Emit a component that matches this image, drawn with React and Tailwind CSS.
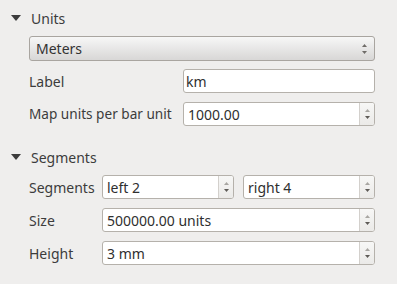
import React from 'react';

const Arrow = ({ down, className }) => (
  <svg width="5" height="3" viewBox="0 0 5 3" className={className}>
    {down ? <path d="M0 0h5L2.5 3z" fill="currentColor" /> : <path d="M0 3h5L2.5 0z" fill="currentColor" />}
  </svg>
);

function SectionHeader({ title }) {
  return (
    <div className="flex items-center h-[18px] pl-[11px]">
      <svg width="10" height="6" viewBox="0 0 10 6" className="text-[#3c3c3c]">
        <path d="M0 0h10L5 6z" fill="currentColor" />
      </svg>
      <span className="ml-[10px] text-[14px]">{title}</span>
    </div>
  );
}

function SpinBox({ value, className }) {
  return (
    <div className={`flex h-[24px] rounded-[3px] border border-[#b5b1ab] bg-white overflow-hidden ${className}`}>
      <div className="flex-1 flex items-center pl-[4px] text-[#2f2f2f] text-[14px]">{value}</div>
      <div className="w-[15px] flex flex-col items-center justify-between pt-[6px] pb-[6px] border-l border-[#d3d0cc] bg-gradient-to-b from-[#f7f7f6] to-[#ebeae8]">
        <Arrow className="text-[#a8a6a2]" />
        <Arrow down className="text-[#5e5b57]" />
      </div>
    </div>
  );
}

function TextBox({ value, className }) {
  return (
    <div className={`flex items-center h-[24px] rounded-[3px] border border-[#b5b1ab] bg-white pl-[2px] text-[#2f2f2f] text-[14px] ${className}`}>
      {value}
    </div>
  );
}

export default function App() {
  return (
    <div className="w-[397px] h-[284px] bg-[#efeeed] text-[#3c3c3c] text-[13px] font-['Noto_Sans',sans-serif] overflow-hidden">
      {/* Units */}
      <div className="pt-[9px] pb-[9px]">
        <SectionHeader title="Units" />
      </div>
      <div className="ml-[29px] w-[346px] h-[25px] flex items-center rounded-[3px] border border-[#a9a5a0] bg-gradient-to-b from-[#f7f7f7] to-[#d8d7d6] pl-[6px] pr-[7px]">
        <span className="flex-1 text-[14px] text-[#333]">Meters</span>
        <div className="flex flex-col gap-[4px]">
          <Arrow className="text-[#6f6c68]" />
          <Arrow down className="text-[#6f6c68]" />
        </div>
      </div>
      <div className="flex items-center mt-[8px] pl-[29px]">
        <span className="w-[154px] text-[14px]">Label</span>
        <TextBox value="km" className="w-[192px]" />
      </div>
      <div className="flex items-center mt-[9px] pl-[29px]">
        <span className="w-[154px] text-[13.6px] whitespace-nowrap">Map units per bar unit</span>
        <SpinBox value="1000.00" className="w-[192px]" />
      </div>

      {/* Segments */}
      <div className="pt-[22px] pb-[9px]">
        <SectionHeader title="Segments" />
      </div>
      <div className="flex items-center pl-[29px]">
        <span className="w-[73px] text-[14px]">Segments</span>
        <SpinBox value="left 2" className="w-[132px]" />
        <SpinBox value="right 4" className="w-[132px] ml-[9px]" />
      </div>
      <div className="flex items-center mt-[9px] pl-[29px]">
        <span className="w-[73px] text-[14px]">Size</span>
        <SpinBox value="500000.00 units" className="w-[273px]" />
      </div>
      <div className="flex items-center mt-[9px] pl-[29px]">
        <span className="w-[73px] text-[14px]">Height</span>
        <SpinBox value="3 mm" className="w-[273px]" />
      </div>
    </div>
  );
}
